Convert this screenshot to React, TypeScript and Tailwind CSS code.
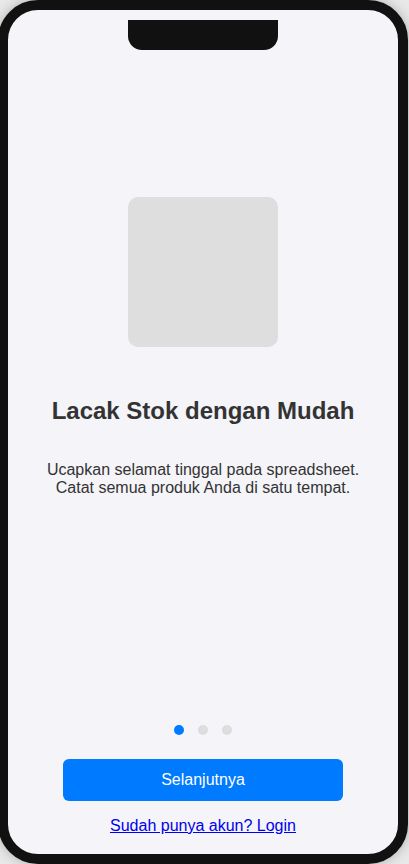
const Dot = ({ active }: { active?: boolean }) => (
    <span className={active ? "w-[10px] h-[10px] rounded-full bg-[#007aff]" : "w-[10px] h-[10px] rounded-full bg-[#dddddd]"} />
);

const App = () => {
    return (
        <div className="min-h-screen w-full bg-[#e8e8e8] flex overflow-hidden" style={{ fontFamily: '"Liberation Sans", Arial, sans-serif' }}>
            <div className="relative shrink-0 -ml-[2px] w-[410px] h-[864px] border-[10px] border-[#111111] rounded-[40px] bg-[#f4f4f9] shadow-[0_0_12px_rgba(0,0,0,0.25)] overflow-hidden">
                <div className="absolute top-[10px] left-1/2 -translate-x-1/2 w-[150px] h-[30px] bg-[#111111] rounded-b-[14px]" />
                <div className="flex flex-col h-full">
                    <div className="flex-1 flex flex-col items-center justify-center pb-[42px] px-5 text-[#333333]">
                        <div className="w-[150px] h-[150px] rounded-[10px] bg-[#dedede]" />
                        <h1 className="mt-[50px] text-[24px] font-bold leading-[normal]">Lacak Stok dengan Mudah</h1>
                        <p className="mt-[36px] text-[16px] leading-[normal] text-center">
                            Ucapkan selamat tinggal pada spreadsheet.<br />
                            Catat semua produk Anda di satu tempat.
                        </p>
                    </div>
                    <div className="flex flex-col items-center pb-[19px]">
                        <div className="flex gap-[14px]">
                            <Dot active />
                            <Dot />
                            <Dot />
                        </div>
                        <button className="mt-[24px] w-[280px] h-[42px] rounded-[6px] bg-[#007aff] text-white text-[16px]">Selanjutnya</button>
                        <a href="#" className="mt-[16px] text-[16px] leading-[normal] text-[#0000ee] underline">Sudah punya akun? Login</a>
                    </div>
                </div>
            </div>
        </div>
    );
};

export default App;
